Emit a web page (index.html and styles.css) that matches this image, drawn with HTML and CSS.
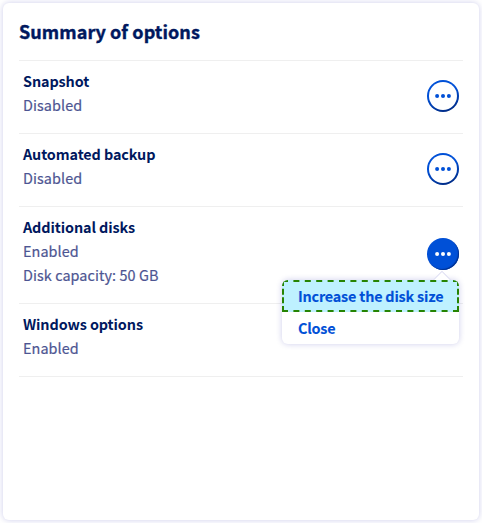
FILE: index.html
```html
<!DOCTYPE html>
<html lang="en">
<head>
<meta charset="utf-8">
<title>Summary of options</title>
<link rel="stylesheet" href="styles.css">
</head>
<body>
<section class="tile">
  <h2 class="tile-title">Summary of options</h2>
  <dl class="options">
    <div class="option">
      <div class="option-text"><dt>Snapshot</dt><dd>Disabled</dd></div>
      <button class="action" aria-label="Actions"><svg viewBox="0 0 16 4"><circle cx="2.1" cy="2" r="2"/><circle cx="8" cy="2" r="2"/><circle cx="13.9" cy="2" r="2"/></svg></button>
    </div>
    <div class="option">
      <div class="option-text"><dt>Automated backup</dt><dd>Disabled</dd></div>
      <button class="action" aria-label="Actions"><svg viewBox="0 0 16 4"><circle cx="2.1" cy="2" r="2"/><circle cx="8" cy="2" r="2"/><circle cx="13.9" cy="2" r="2"/></svg></button>
    </div>
    <div class="option">
      <div class="option-text"><dt>Additional disks</dt><dd>Enabled</dd><dd>Disk capacity: 50 GB</dd></div>
      <div class="menu-anchor">
        <button class="action action-open" aria-label="Actions"><svg viewBox="0 0 16 4"><circle cx="2.1" cy="2" r="2"/><circle cx="8" cy="2" r="2"/><circle cx="13.9" cy="2" r="2"/></svg></button>
        <div class="menu">
          <div class="menu-list">
            <div class="menu-item focused">Increase the disk size
              <svg class="focus-ring" viewBox="0 0 177 32"><path class="dash-h" d="M0 1H177M0 31H177"/><path class="dash-v" d="M1 0V32M176 0V32"/></svg>
            </div>
            <div class="menu-item">Close</div>
          </div>
        </div>
      </div>
    </div>
    <div class="option">
      <div class="option-text"><dt>Windows options</dt><dd>Enabled</dd></div>
    </div>
  </dl>
</section>
</body>
</html>
```

FILE: styles.css
```css
* { box-sizing: border-box; }
body {
  margin: 0;
  padding: 3px;
  background: #fff;
  font-family: "Source Sans Pro", "Noto Sans CJK SC", sans-serif;
  font-size: 14.4px;
  line-height: 24px;
  color: #4d5592;
}
.tile {
  width: 476px;
  height: 517px;
  padding: 15px 16px 16px;
  border-radius: 6px;
  background: #fff;
  box-shadow: 0 0 6px rgba(0, 0, 155, .2);
}
.tile-title {
  margin: 0;
  height: 42px;
  font-size: 18px;
  line-height: 26px;
  font-weight: 700;
  letter-spacing: .07px;
  color: #00185e;
  -webkit-text-stroke: .4px #00185e;
}
.options { margin: 0; border-top: 1px solid #efefef; }
.option {
  display: flex;
  justify-content: space-between;
  align-items: center;
  padding: 0 4px;
  border-bottom: 1px solid #efefef;
}
.option-text { padding: 8px 0 16px; }
dt { font-weight: 700; letter-spacing: -.1px; color: #00185e; }
dd { margin: 0; letter-spacing: .08px; -webkit-text-stroke: .2px #4d5592; }
.menu-anchor { position: relative; display: flex; }
.action {
  display: flex;
  align-items: center;
  justify-content: center;
  width: 32px;
  height: 32px;
  margin: 0 0 2px;
  padding: 0;
  border: 2px solid transparent;
  border-radius: 50%;
  background: linear-gradient(#fff, #fff) padding-box, linear-gradient(160deg, #0050d7 40%, #002b85 90%) border-box;
}
.action svg { width: 16px; height: 4px; fill: #0050d7; }
.action-open { background: #0050d7; border: 0; box-shadow: inset -1px -1px 1px #00308f; }
.action-open svg { fill: #fff; }
.menu {
  position: absolute;
  top: 42px;
  right: 0;
  width: 177px;
  border-radius: 6px;
  background: #fff;
  box-shadow: 0 0 6px rgba(0, 0, 155, .2);
}
.menu::before {
  content: "";
  position: absolute;
  top: -6px;
  right: 9px;
  width: 14px;
  height: 14px;
  transform: rotate(45deg);
  background: #fff;
  border: 1px solid #dcdcf2;
}
.menu-list { position: relative; overflow: hidden; border-radius: 6px; }
.menu-item {
  position: relative;
  height: 32px;
  padding: 0 16px;
  line-height: 32px;
  font-weight: 700;
  letter-spacing: -.2px;
  color: #0050d7;
  -webkit-text-stroke: .1px #0050d7;
  white-space: nowrap;
}
.focused { background: #bef1ff; }
.focus-ring {
  position: absolute;
  inset: 0;
  width: 177px;
  height: 32px;
  fill: none;
  stroke: #268403;
  stroke-width: 2;
}
.dash-h { stroke-dasharray: 6 5.4; }
.dash-v { stroke-dasharray: 6 2.67; }
```
